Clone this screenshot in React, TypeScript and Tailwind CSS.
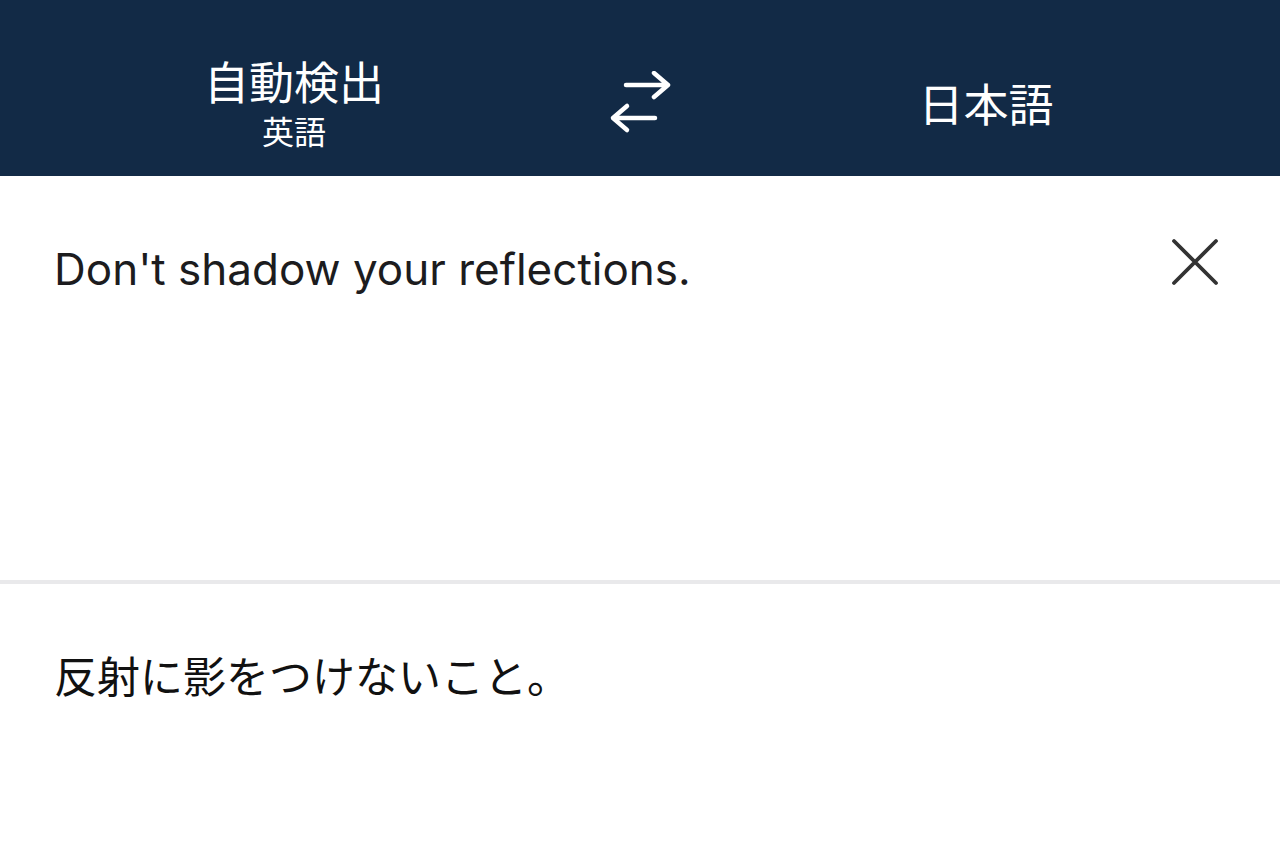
const sans = 'font-["Inter","Noto_Sans_CJK_JP",sans-serif]';

function SwapIcon() {
  return (
    <svg width="64" height="64" viewBox="0 0 64 64" fill="none" stroke="white" strokeWidth="4.5" strokeLinecap="round" strokeLinejoin="round">
      <path d="M18 14H60M46 2L60 14L46 26" />
      <path d="M47 47H5M19 35L5 47L19 59" />
    </svg>
  );
}

function CloseIcon() {
  return (
    <svg width="48" height="48" viewBox="0 0 48 48" fill="none" stroke="#333333" strokeWidth="3.8" strokeLinecap="round" className="shrink-0 -mt-[5px]">
      <path d="M3 3L45 45M45 3L3 45" />
    </svg>
  );
}

export default function App() {
  return (
    <div className={`min-h-[861px] bg-white ${sans}`}>
      {/* Language bar */}
      <header className="h-[176px] bg-[#122a46] flex items-center pt-[30px] text-white">
        <div className="flex-1 flex flex-col items-center gap-[10px]">
          <span className='text-[45px] leading-[44px] font-["Noto_Sans_CJK_JP",sans-serif]'>自動検出</span>
          <span className='text-[32px] leading-[34px] font-["Noto_Sans_CJK_JP",sans-serif]'>英語</span>
        </div>
        <div className="w-[104px] flex justify-center">
          <SwapIcon />
        </div>
        <div className="flex-1 flex justify-center">
          <span className='text-[45px] leading-[52px] font-["Noto_Sans_CJK_JP",sans-serif]'>日本語</span>
        </div>
      </header>

      {/* Source text */}
      <section className="h-[404px] flex items-start justify-between pl-[54px] pr-[61px] pt-[67px]">
        <p className="text-[44px] leading-[52px] text-[#1c1c1e]">Don't shadow your reflections.</p>
        <CloseIcon />
      </section>

      <div className="h-[4px] bg-[#e9e9eb]" />

      {/* Translation */}
      <section className="px-[54px] pt-[64px]">
        <p className='text-[43px] leading-[52px] text-[#111111] font-["Noto_Sans_CJK_JP",sans-serif]'>反射に影をつけないこと。</p>
      </section>
    </div>
  );
}
